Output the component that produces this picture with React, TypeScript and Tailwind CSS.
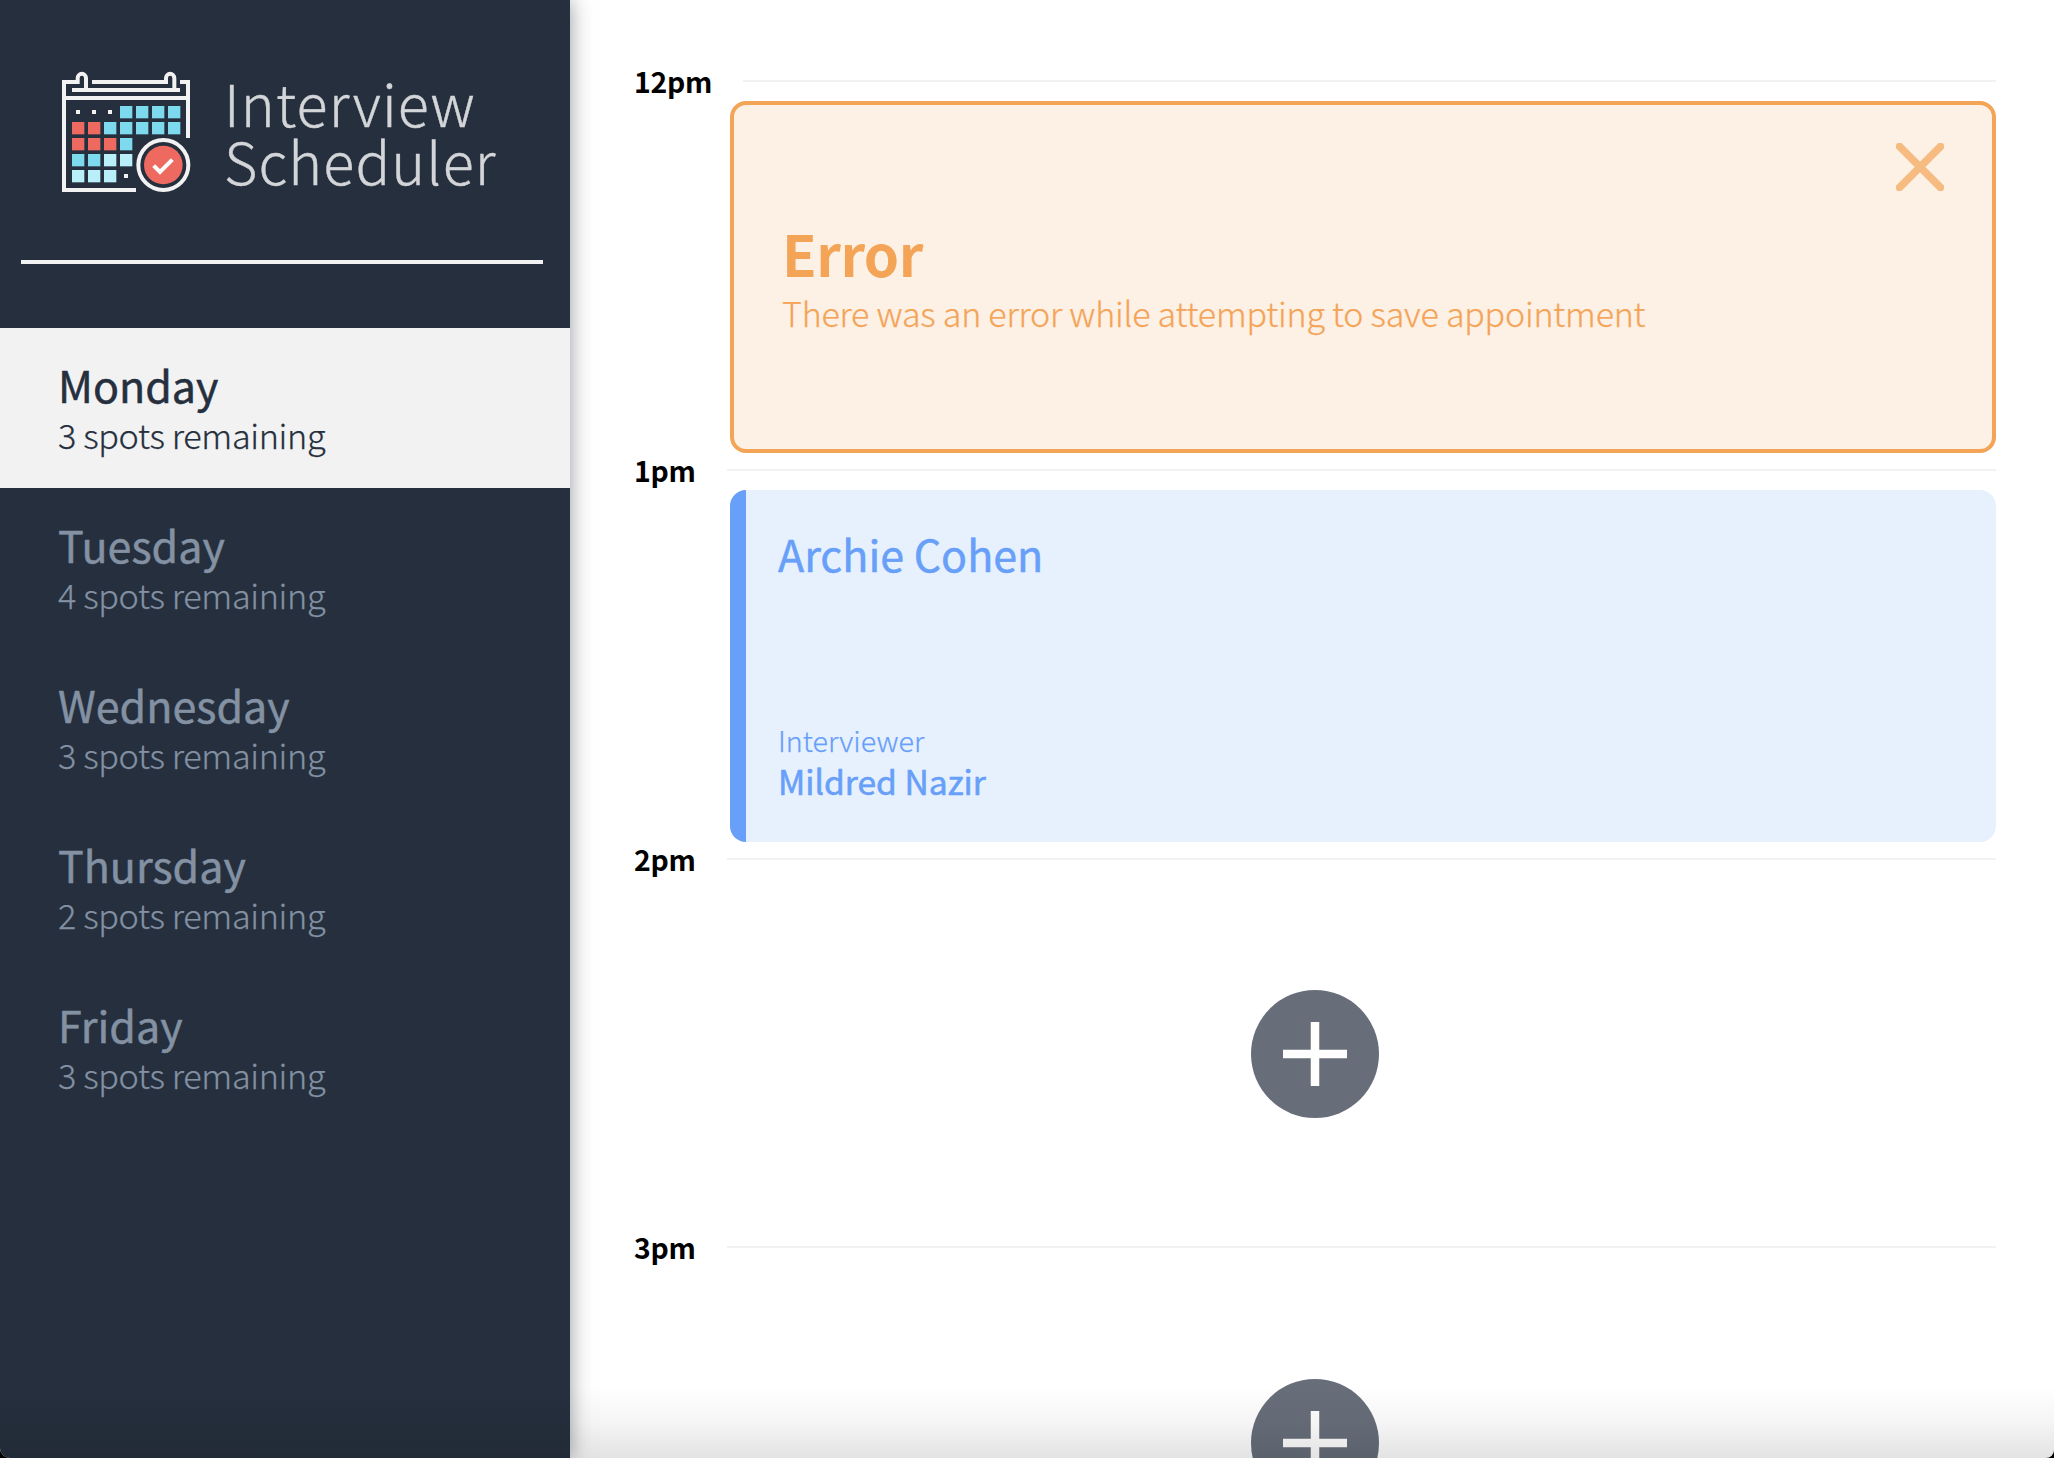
import React from 'react';

type Day = { name: string; spots: number };

const days: Day[] = [
  { name: 'Monday', spots: 3 },
  { name: 'Tuesday', spots: 4 },
  { name: 'Wednesday', spots: 3 },
  { name: 'Thursday', spots: 2 },
  { name: 'Friday', spots: 3 },
];

const cells: [number, number, string][] = [
  [240, 168, '#7dd9ee'], [288, 168, '#7dd9ee'], [336, 168, '#7dd9ee'], [384, 168, '#7dd9ee'],
  [96, 216, '#ee6a60'], [144, 216, '#ee6a60'], [192, 216, '#7dd9ee'], [240, 216, '#7dd9ee'],
  [288, 216, '#7dd9ee'], [336, 216, '#7dd9ee'], [384, 216, '#7dd9ee'],
  [96, 264, '#ee6a60'], [144, 264, '#ee6a60'], [192, 264, '#ee6a60'], [240, 264, '#7dd9ee'],
  [96, 312, '#7dd9ee'], [144, 312, '#7dd9ee'], [192, 312, '#b9eff9'], [240, 312, '#b9eff9'],
  [96, 360, '#b9eff9'], [144, 360, '#b9eff9'], [192, 360, '#b9eff9'],
];

const dots: [number, number][] = [[108, 180], [156, 180], [204, 180], [252, 372]];

function CalendarLogo() {
  return (
    <svg viewBox="0 0 510 480" className="h-[160px] w-[170px] shrink-0">
      <g fill="none" stroke="#f2f2f2" strokeWidth="12">
        <path d="M138 114V84a12 12 0 0 0-25 0v12H72v324h216" />
        <path d="M156 96h222V84a12 12 0 0 1 25 0v30" />
        <path d="M96 120h324" />
        <path d="M420 96h24v168" />
        <path d="M72 144h372" />
      </g>
      {cells.map(([x, y, fill]) => (
        <rect key={`${x}-${y}`} x={x} y={y} width="37" height="37" fill={fill} />
      ))}
      {dots.map(([x, y]) => (
        <rect key={`${x}-${y}`} x={x} y={y} width="12" height="12" fill="#f2f2f2" />
      ))}
      <circle cx="370" cy="345" r="75" fill="none" stroke="#f2f2f2" strokeWidth="12" />
      <circle cx="370" cy="345" r="58" fill="#ee6a60" />
      <path d="M341 347l19 19 37-37" fill="none" stroke="#fff" strokeWidth="12" />
    </svg>
  );
}

function DayItem({ day, selected }: { day: Day; selected: boolean }) {
  return (
    <li
      className={
        selected
          ? 'h-[160px] bg-[#f2f2f2] pt-[31px] pl-[58px] text-[#252f3d]'
          : 'h-[160px] pt-[31px] pl-[58px] text-[#8391a3]'
      }
    >
      <h2 className="text-[43px] leading-[50px] font-normal [-webkit-text-stroke:0.5px_currentColor]">{day.name}</h2>
      <h3 className="text-[34.2px] leading-[50px] font-light tracking-[-0.34px] [-webkit-text-stroke:0.25px_currentColor]">
        {day.spots} spots remaining
      </h3>
    </li>
  );
}

function Slot({ time, children }: { time: string; children?: React.ReactNode }) {
  return (
    <section>
      <header className="flex h-[37px] items-start">
        <h4 className="mr-[31.5px] text-[28.4px] leading-[33px] font-bold tracking-[-0.3px] text-black">{time}</h4>
        <div className="mt-[16px] h-[2px] flex-1 bg-[#f1f2f2]" />
      </header>
      {children}
    </section>
  );
}

function ErrorCard() {
  return (
    <article className="ml-[96px] flex h-[352px] justify-between rounded-[16px] border-4 border-[#f4a457] bg-[#fdf0e4] text-[#f4a457]">
      <div className="pt-[115px] pl-[48px]">
        <h1 className="text-[56.5px] leading-[64px] font-bold tracking-[-0.5px]">Error</h1>
        <h3 className="mt-[4px] text-[34px] leading-[50px] font-light tracking-[-0.22px] whitespace-nowrap [-webkit-text-stroke:0.25px_currentColor]">
          There was an error while attempting to save appointment
        </h3>
      </div>
      <svg viewBox="0 0 48 48" className="mt-[38px] mr-[48px] h-[48px] w-[48px]">
        <path d="M3.5 3.5l41 41M44.5 3.5l-41 41" stroke="#f6bb81" strokeWidth="7.6" strokeLinecap="square" />
      </svg>
    </article>
  );
}

function InterviewCard() {
  return (
    <article className="ml-[96px] flex h-[352px] overflow-hidden rounded-[16px] bg-[#e7f1fe] text-[#689ff8]">
      <div className="w-[16px] bg-[#689ff8]" />
      <div className="flex flex-col justify-between pt-[38px] pb-[40px] pl-[32px]">
        <h2 className="text-[43px] leading-[50px] font-normal [-webkit-text-stroke:0.5px_currentColor]">Archie Cohen</h2>
        <div>
          <h4 className="text-[28.7px] leading-[39px] font-light [-webkit-text-stroke:0.25px_currentColor]">Interviewer</h4>
          <h3 className="mt-px text-[33.6px] leading-[42px] font-normal [-webkit-text-stroke:0.6px_currentColor]">
            Mildred Nazir
          </h3>
        </div>
      </div>
    </article>
  );
}

function EmptyCard({ compact = false }: { compact?: boolean }) {
  return (
    <article
      className={
        compact ? 'flex h-[351px] items-start justify-center pt-[111px]' : 'flex h-[352px] items-start justify-center pt-[112px]'
      }
    >
      <svg viewBox="0 0 128 128" className="h-[128px] w-[128px]">
        <circle cx="64" cy="64" r="64" fill="#676e7a" />
        <path d="M64 32v64M32 64h64" stroke="#fff" strokeWidth="8.5" />
      </svg>
    </article>
  );
}

export default function App() {
  return (
    <div className="h-[1458px] w-[2054px] overflow-hidden bg-black font-['Noto_Sans_CJK_SC',sans-serif]">
      <div className="relative flex h-full overflow-hidden rounded-br-[8px] rounded-bl-[10px] bg-white">
        <aside className="z-10 h-full w-[570px] shrink-0 bg-[#252f3d] shadow-[0_0_20px_rgba(37,47,61,0.5)]">
          <div className="flex h-[260px] items-start pt-[50px] pl-[40px]">
            <CalendarLogo />
            <p className="mt-[23px] ml-[14px] text-[57.5px] leading-[58px] font-light tracking-[1.15px] text-[#d3d5d8] [-webkit-text-stroke:0.4px_currentColor]">
              Interview
              <br />
              Scheduler
            </p>
          </div>
          <hr className="ml-[21px] h-[4px] w-[522px] border-0 bg-[#f2f2f2]" />
          <ul className="mt-[64px]">
            {days.map((day) => (
              <DayItem key={day.name} day={day} selected={day.name === 'Monday'} />
            ))}
          </ul>
        </aside>
        <main className="h-full flex-1 overflow-hidden pt-[64px] pr-[58px] pl-[64px]">
          <Slot time="12pm">
            <ErrorCard />
          </Slot>
          <Slot time="1pm">
            <InterviewCard />
          </Slot>
          <Slot time="2pm">
            <EmptyCard compact />
          </Slot>
          <Slot time="3pm">
            <EmptyCard />
          </Slot>
        </main>
        <div className="pointer-events-none absolute inset-x-0 bottom-0 z-20 h-[72px] bg-linear-to-b from-black/0 via-black/4 to-black/11" />
      </div>
    </div>
  );
}
